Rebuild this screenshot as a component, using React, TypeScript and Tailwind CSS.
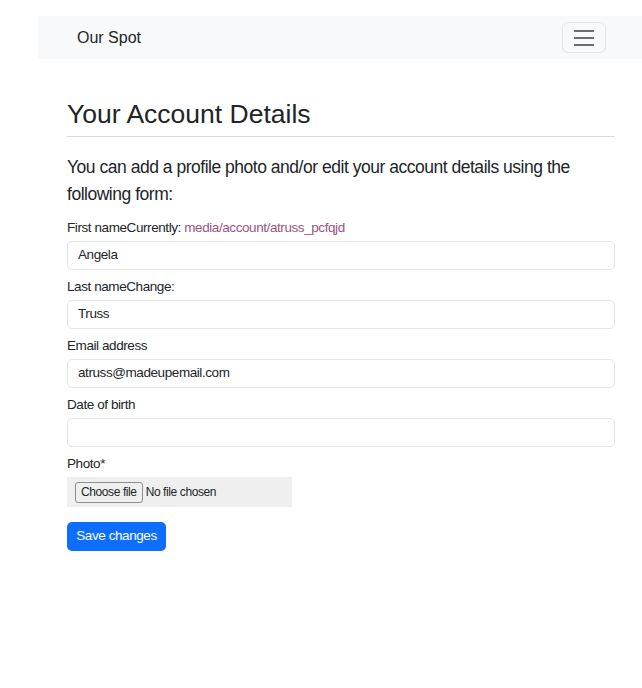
import React from 'react';

const fields = [
  { label: 'First name', extra: 'Currently: ', link: 'media/account/atruss_pcfqjd', value: 'Angela' },
  { label: 'Last name', extra: 'Change:', value: 'Truss' },
  { label: 'Email address', value: 'atruss@madeupemail.com' },
  { label: 'Date of birth', value: '' },
];

export default function App() {
  return (
    <main className="min-h-screen bg-white pt-4 pl-[38px] text-[#212529] font-['Liberation_Sans',Arial,sans-serif]">
      {/* Navbar */}
      <nav className="h-[43px] bg-[#f8f9fa] flex items-center justify-between pl-[39px] pr-9">
        <span className="text-base">Our Spot</span>
        <button className="w-[44px] h-[31px] border border-[#e4e5e6] rounded-md flex flex-col items-center justify-center gap-[5px]">
          <span className="block w-5 h-[2px] bg-[#6b6e71]" />
          <span className="block w-5 h-[2px] bg-[#6b6e71]" />
          <span className="block w-5 h-[2px] bg-[#6b6e71]" />
        </button>
      </nav>

      <div className="pl-[29px] pr-[27px] pt-[38px]">
        <h2 className="text-[26.5px] leading-[34px]">Your Account Details</h2>
        <hr className="mt-[5px] border-t border-[#dcdcdc]" />
        <p className="mt-[17px] text-[17.5px] leading-[27px] tracking-[-0.48px]">
          You can add a profile photo and/or edit your account details using the following form:
        </p>

        <form className="mt-[9px] text-[13.5px] tracking-[-0.42px]">
          {fields.map(f => (
            <div key={f.label} className="mb-[6px]">
              <label className="block leading-[21px] mb-[3px]">
                {f.label}
                {f.extra}
                {f.link && <a className="text-[#a0527f]">{f.link}</a>}
              </label>
              <div className="h-[29px] border border-[#e2e4e6] rounded-[5px] px-[10px] flex items-center">
                {f.value}
              </div>
            </div>
          ))}

          <label className="block leading-[21px] mb-[3px]">Photo*</label>
          <div className="w-[225px] h-[30px] bg-[#efefef] flex items-center pl-[8px] gap-[3px] text-[12px] tracking-[-0.4px]">
            <span className="h-[21px] px-[5px] flex items-center border border-[#8f8f8f] rounded-[3px] bg-[#efefef]">
              Choose file
            </span>
            <span>No file chosen</span>
          </div>

          <button type="button" className="mt-[15px] w-[99px] h-[29px] bg-[#0d6efd] text-white rounded-[5px]">
            Save changes
          </button>
        </form>
      </div>
    </main>
  );
}
